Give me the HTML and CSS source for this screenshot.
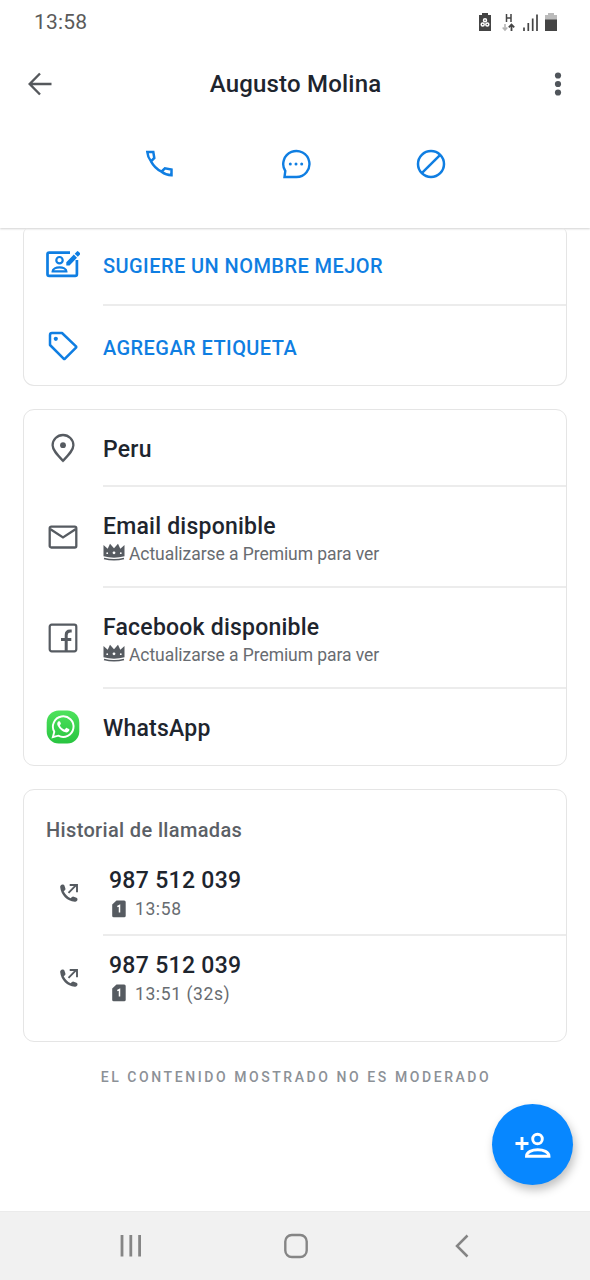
FILE: index.html
```html
<!DOCTYPE html>
<html lang="es">
<head>
<meta charset="utf-8">
<title>Augusto Molina</title>
<link rel="stylesheet" href="styles.css">
</head>
<body>
<div class="screen">
  <header class="header">
    <div class="status">
      <span class="clock">13:58</span>
      <svg class="status-icons" width="84" height="22" viewBox="0 0 84 22">
        <path fill="#444" d="M4 2h3V0h6v2h3v16H4z"/>
        <g fill="none" stroke="#fff" stroke-width="1.500"><circle cx="10" cy="7.300" r="1.500"/><circle cx="7.700" cy="11.500" r="1.500"/><circle cx="12.300" cy="11.500" r="1.500"/></g>
        <path d="M31.500 1v8M36 1v8M31.500 5H36" stroke="#444" stroke-width="1.500"/>
        <path d="M30 11v6M27.700 14.500l2.300 2.500 2.300-2.500" fill="none" stroke="#b5b5b5" stroke-width="1.600"/>
        <path d="M36.500 18v-6M33.800 14.300l2.700-2.800 2.700 2.800" fill="none" stroke="#444" stroke-width="1.800"/>
        <path d="M49 14.500V18M53.300 10v8M57.700 5.500V18M62 1.500V18" stroke="#444" stroke-width="1.700"/>
        <path fill="#bbb" d="M70 2h3V0h6v2h3v5H70z"/>
        <path fill="#444" d="M70 6.500h12V18H70z"/>
      </svg>
    </div>
    <div class="titlebar">
      <svg width="24" height="24" viewBox="0 0 24 24" fill="none" stroke="#55585c" stroke-width="2.400"><path d="M23.500 12H2M12 1.500L1.700 12 12 22.500"/></svg>
      <h1 class="title">Augusto Molina</h1>
      <svg width="8" height="26" viewBox="0 0 8 26" fill="#50555b"><circle cx="4" cy="4.500" r="3.100"/><circle cx="4" cy="13" r="3.100"/><circle cx="4" cy="21.500" r="3.100"/></svg>
    </div>
    <div class="actions">
      <svg width="30" height="30" viewBox="0 0 30 30" fill="none" stroke="#0f7ee2" stroke-width="2.500"><path d="M3.300 3h6l1 6-3.300 3.300C4 8.500 3.500 5.500 3.300 3zM7 12.300c2.600 4.800 5.800 7.900 10.500 10.400l3.400-3.400 6.600 1.200v5.700c-3.300 0-6.500-.9-10-3.500"/></svg>
      <svg class="chat" width="30" height="30" viewBox="0 0 30 30" fill="none" stroke="#0f7ee2" stroke-width="2.400"><path d="M15.500 28H3.500l.8-6A13.100 13 0 1 1 15.500 28z"/><g fill="#0f7ee2" stroke="none"><circle cx="9.300" cy="15" r="1.500"/><circle cx="15" cy="15" r="1.500"/><circle cx="20.700" cy="15" r="1.500"/></g></svg>
      <svg width="30" height="30" viewBox="0 0 30 30" fill="none" stroke="#0f7ee2" stroke-width="2.500"><circle cx="15" cy="15" r="13"/><path d="M5.800 24.200L24.200 5.800"/></svg>
    </div>
  </header>

  <main class="content">
    <section class="card card-top">
      <div class="row row-suggest">
        <div class="icon"><svg width="34" height="28" viewBox="0 0 34 28"><path d="M24 2.600H3.200Q1.500 2.600 1.500 4.300v19.900q0 1.700 1.700 1.700h26q1.700 0 1.700-1.700V10" fill="none" stroke="#0f7ee2" stroke-width="2.700"/><circle cx="13.500" cy="10.200" r="3.200" fill="none" stroke="#0f7ee2" stroke-width="2.200"/><path d="M6.600 21.400c0-5.400 13.800-5.400 13.800 0z" fill="none" stroke="#0f7ee2" stroke-width="2.200"/><path fill="#0f7ee2" d="M20.300 12.200l7.500-7.600 3.200 3.200-7.500 7.600h-3.200zM28.700 3.700l2.200-2.300q.7-.7 1.400 0l1.700 1.700q.7.700 0 1.400l-2.200 2.300z"/></svg></div>
        <div class="body"><span class="link">SUGIERE UN NOMBRE MEJOR</span></div>
      </div>
      <div class="row row-tag">
        <div class="icon"><svg width="30" height="30" viewBox="0 0 30 30" fill="none" stroke="#0f7ee2" stroke-width="2.500" stroke-linejoin="round"><path d="M4 2h10L28 15.300q.5.700 0 1.400L17 27.700q-.7.500-1.400 0L2 14V4q0-2 2-2z"/><circle cx="7.800" cy="7.800" r="2.100" fill="#0f7ee2" stroke="none"/></svg></div>
        <div class="body"><span class="link">AGREGAR ETIQUETA</span></div>
      </div>
    </section>

    <section class="card">
      <div class="row row-place">
        <div class="icon"><svg width="26" height="30" viewBox="0 0 26 30"><path d="M13 27.800C7 21.500 2.600 17 2.600 12.300a10.400 10.300 0 0 1 20.800 0C23.400 17 19 21.500 13 27.800z" fill="none" stroke="#565b61" stroke-width="2.300"/><circle cx="13" cy="12.200" r="2.900" fill="#565b61"/></svg></div>
        <div class="body"><span class="name">Peru</span></div>
      </div>
      <div class="row row-info">
        <div class="icon"><svg width="30" height="24" viewBox="0 0 30 24" fill="none" stroke="#565b61" stroke-width="2.300"><rect x="1.700" y="1.700" width="26.600" height="20.800" rx="1.500"/><path d="M2.500 4.200L15 12.400 27.500 4.200"/></svg></div>
        <div class="body">
          <span class="name">Email disponible</span>
          <span class="note"><svg width="22" height="18" viewBox="0 0 22 18"><path fill="#565b61" d="M.5 2l4.200 3.700L7 .7l4 4.600L15 .7l2.300 5L21.500 2v11.300q-10.500 2.800-21 0z"/><path d="M1 15.500q10 2.700 20 0" fill="none" stroke="#565b61" stroke-width="1.500"/><g fill="#fff"><circle cx="4.200" cy="10.200" r=".9"/><circle cx="11" cy="9.800" r="1.400"/><circle cx="17.800" cy="10.200" r=".9"/></g></svg><span>Actualizarse a Premium para ver</span></span>
        </div>
      </div>
      <div class="row row-info">
        <div class="icon"><svg width="30" height="30" viewBox="0 0 30 30" fill="none" stroke="#565b61"><rect x="1.700" y="1.700" width="26.600" height="26.600" rx="2" stroke-width="2.200"/><path d="M18.200 28V12q0-4 3.900-4h1.600M13 16.500h10.300" stroke-width="3"/></svg></div>
        <div class="body">
          <span class="name">Facebook disponible</span>
          <span class="note"><svg width="22" height="18" viewBox="0 0 22 18"><path fill="#565b61" d="M.5 2l4.200 3.700L7 .7l4 4.600L15 .7l2.300 5L21.500 2v11.300q-10.500 2.800-21 0z"/><path d="M1 15.500q10 2.700 20 0" fill="none" stroke="#565b61" stroke-width="1.500"/><g fill="#fff"><circle cx="4.200" cy="10.200" r=".9"/><circle cx="11" cy="9.800" r="1.400"/><circle cx="17.800" cy="10.200" r=".9"/></g></svg><span>Actualizarse a Premium para ver</span></span>
        </div>
      </div>
      <div class="row row-wa">
        <div class="icon"><svg width="34" height="34" viewBox="0 0 34 34"><defs><linearGradient id="wa" x2="0" y2="1"><stop offset="0" stop-color="#4ee25c"/><stop offset="1" stop-color="#28c440"/></linearGradient></defs><rect x=".7" y=".5" width="32.600" height="33" rx="12" fill="url(#wa)"/><path d="M6.800 27.200l1.500-5.400a10.300 10.300 0 1 1 4 3.900z" fill="none" stroke="#fff" stroke-width="1.900"/><path fill="#fff" d="M13.400 11.200h-.9c-1.400 1-1.700 2.900-.6 4.800 1.700 3.200 4.300 5.500 7.600 6.300 2 .4 3.800-.7 3.900-2.500 0-.4-.1-.6-.4-.8l-2.300-1.100c-.4-.2-.7 0-.9.300l-.8 1c-.3.300-.5.300-.8.200-1.900-.8-3.200-2-4.200-3.700-.2-.3-.1-.5.100-.8l.7-.9c.1-.3.100-.5 0-.8l-.8-1.700z"/></svg></div>
        <div class="body"><span class="name">WhatsApp</span></div>
      </div>
    </section>

    <section class="card card-calls">
      <h2 class="heading">Historial de llamadas</h2>
      <div class="row row-call">
        <div class="icon call-icon"><svg width="20" height="20" viewBox="0 0 20 20"><path fill="#565b61" d="M1.200 4.200C1 2.800 2 1.700 3.500 1.500q1.500-.2 1.900 1l1 3q.3 1-.5 1.700L4.700 8.300c1.700 3.300 3.600 5.300 7 7l1.200-1.200q.8-.7 1.800-.4l2.800 1q1.200.4 1 1.900c-.2 1.500-1.200 2.400-2.700 2.200C8 18 2 12 1.200 4.200z"/><path d="M9.500 9.800l7.600-7.600M10.700 2H18v7.200" fill="none" stroke="#565b61" stroke-width="1.900"/></svg></div>
        <div class="body">
          <span class="name number">987 512 039</span>
          <span class="time"><svg width="14" height="18" viewBox="0 0 14 18"><path fill="#565b61" d="M4.500.5h7.700Q13.700.5 13.700 2v13.700q0 1.500-1.500 1.500H1.700q-1.500 0-1.500-1.500V4.600z"/><path d="M5.300 6.700l2.200-1.200v6.900" fill="none" stroke="#fff" stroke-width="1.500"/></svg><span>13:58</span></span>
        </div>
      </div>
      <div class="row row-call">
        <div class="icon call-icon"><svg width="20" height="20" viewBox="0 0 20 20"><path fill="#565b61" d="M1.200 4.200C1 2.800 2 1.700 3.500 1.500q1.500-.2 1.900 1l1 3q.3 1-.5 1.700L4.700 8.300c1.700 3.300 3.600 5.300 7 7l1.200-1.200q.8-.7 1.800-.4l2.800 1q1.200.4 1 1.900c-.2 1.500-1.200 2.400-2.700 2.200C8 18 2 12 1.200 4.200z"/><path d="M9.500 9.800l7.600-7.600M10.700 2H18v7.200" fill="none" stroke="#565b61" stroke-width="1.900"/></svg></div>
        <div class="body">
          <span class="name number">987 512 039</span>
          <span class="time"><svg width="14" height="18" viewBox="0 0 14 18"><path fill="#565b61" d="M4.500.5h7.700Q13.700.5 13.700 2v13.700q0 1.500-1.500 1.500H1.700q-1.500 0-1.500-1.500V4.600z"/><path d="M5.300 6.700l2.200-1.200v6.900" fill="none" stroke="#fff" stroke-width="1.500"/></svg><span>13:51 (32s)</span></span>
        </div>
      </div>
    </section>
    <p class="disclaimer">EL CONTENIDO MOSTRADO NO ES MODERADO</p>
  </main>

  <button class="fab" aria-label="Agregar contacto"><svg width="36" height="28" viewBox="0 0 36 28" fill="none" stroke="#fff" stroke-width="2.900"><path d="M.5 12.500h13M7 6v13"/><circle cx="22.500" cy="8" r="4.800"/><path d="M11.500 25.200c0-8.600 22.500-8.600 22.500 0z"/></svg></button>

  <nav class="navbar">
    <svg width="22" height="24" viewBox="0 0 22 24" stroke="#858585" stroke-width="2.800"><path d="M2 1v21.500M10.800 1v21.500M19.600 1v21.500"/></svg>
    <svg class="home" width="24" height="26" viewBox="0 0 24 26" fill="none" stroke="#858585" stroke-width="2.400"><rect x="1.300" y="2" width="21.400" height="22" rx="6.500"/></svg>
    <svg width="14" height="24" viewBox="0 0 14 24" fill="none" stroke="#858585" stroke-width="2.500"><path d="M12.500 1.500L2 12l10.500 10.500"/></svg>
  </nav>
</div>
</body>
</html>
```
FILE: styles.css
```css
* { box-sizing: border-box; }
body { margin: 0; background: #fff; font-family: Roboto, "Noto Sans", sans-serif; color: #1e252e; }
svg { display: block; flex: none; }
.screen { position: relative; display: flex; flex-direction: column; width: 590px; height: 1280px; overflow: hidden; }

.header { flex: none; height: 228px; box-shadow: 0 1px 2px rgba(0, 0, 0, .18); }
.status { display: flex; align-items: center; justify-content: space-between; height: 44px; padding: 0 31px 0 34px; }
.clock { font-size: 21px; letter-spacing: .2px; color: #5a5a5a; }
.status-icons { margin-top: 4px; }
.titlebar { display: flex; align-items: center; justify-content: space-between; height: 80px; padding: 0 28px; }
.title { margin: 0 15px 0 0; font-size: 24px; font-weight: 500; letter-spacing: .2px; }
.actions { display: flex; justify-content: space-between; padding: 25px 144px 0; }
.chat { margin-left: 2px; }

.content { flex: 1; padding: 0 23px; }
.card { border: 1.500px solid #e5e5e5; border-radius: 11px; margin-bottom: 23px; }
.card-top { border-top: 0; border-radius: 6px 6px 11px 11px; }
.row { display: flex; }
.icon { flex: none; display: flex; align-items: center; justify-content: center; width: 79px; padding-right: 2px; }
.body { flex: 1; display: flex; flex-direction: column; justify-content: center; border-bottom: 2px solid #ececec; }
.row:last-child .body { border-bottom: 0; }
.row-suggest { height: 78px; }
.row-suggest .icon { padding-bottom: 6px; }
.row-suggest .body { padding-bottom: 1px; }
.row-tag { height: 79px; }
.row-tag .body { padding-top: 4px; }
.row-place { height: 77px; }
.row-place .icon { padding-bottom: 1px; }
.row-place .body { padding-top: 4px; }
.row-info { height: 101px; }
.row-info .icon { padding-bottom: 1px; }
.row-info .body { padding-top: 6px; }
.row-wa { height: 76px; }
.row-wa .icon { padding-bottom: 1px; }
.row-wa .body { padding-top: 3px; }
.link { font-size: 20px; font-weight: 500; letter-spacing: .43px; color: #0f7ee2; }
.name { font-size: 23px; font-weight: 500; line-height: 28px; letter-spacing: .22px; }
.note { display: flex; align-items: center; gap: 4px; line-height: 26px; font-size: 17.500px; letter-spacing: -.06px; color: #686c71; }
.note svg { margin-bottom: 3px; }
.heading { margin: 0; padding: 28px 0 10px 22px; font-size: 20px; line-height: 24px; font-weight: 500; letter-spacing: .35px; color: #5b6066; }
.row-call { height: 84px; }
.card-calls { height: 253px; }
.call-icon { padding: 0 0 2px 11px; }
.row-call .body { padding-top: 5px; }
.row-call:last-child .body { padding-top: 4px; }
.row-call:last-child .call-icon { padding-bottom: 0; }
.number { letter-spacing: .3px; }
.number, .time { margin-left: 6px; }
.time { display: flex; align-items: center; gap: 9px; padding-left: 3px; font-size: 17.500px; line-height: 29px; letter-spacing: .6px; color: #686c71; }
.time svg { margin-bottom: 2px; }
.disclaimer { margin: 0; padding: 1px 0 0 2px; text-align: center; font-size: 14px; line-height: 22px; font-weight: 500; letter-spacing: 2.570px; color: #8c9197; }

.fab { position: absolute; left: 492px; top: 1104px; display: flex; align-items: center; justify-content: center; width: 81px; height: 81px; padding: 0; border: 0; border-radius: 50%; background: #0787ff; box-shadow: 2px 5px 10px rgba(0, 0, 0, .25); }
.navbar { flex: none; display: flex; align-items: center; justify-content: space-between; height: 69px; padding: 0 121px 0 120px; background: #f1f1f1; border-top: 1px solid #ebebeb; }
.home { margin-right: 6px; }
```
